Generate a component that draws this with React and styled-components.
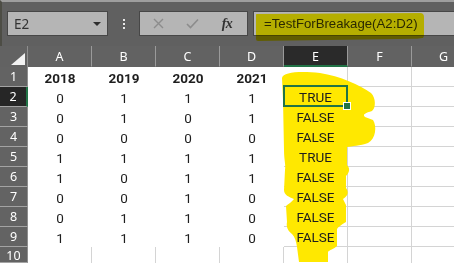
import React from 'react';
import styled, { createGlobalStyle } from 'styled-components';

const GlobalStyle = createGlobalStyle`
  html, body { margin: 0; padding: 0; background: #ffffff; }
  body { font-family: "Liberation Sans", Arial, sans-serif; }
  * { box-sizing: border-box; }
`;

const Window = styled.div`
  position: relative;
  width: 454px;
  height: 271px;
  overflow: hidden;
  background: #ffffff;
  display: flex;
  flex-direction: column;
`;

const Bar = styled.div`
  flex: none;
  height: 46px;
  background: #606060;
  border-top: 2px solid #9e9e9e;
  border-left: 2px solid #4d4d45;
  display: flex;
  align-items: flex-start;
  padding: 9px 0 0 5px;
`;

const NameBox = styled.div`
  width: 101px;
  height: 25px;
  background: #b5b5b5;
  border: 1px solid #474747;
  display: flex;
  align-items: center;
  justify-content: space-between;
  padding: 0 6px 0 6px;
  font-family: "Noto Sans", "Open Sans", sans-serif;
  font-size: 13.5px;
  color: #333333;
`;

const Caret = styled.span`
  width: 0;
  height: 0;
  border-left: 4px solid transparent;
  border-right: 4px solid transparent;
  border-top: 4px solid #2e2e2e;
`;

const Grip = styled.div`
  width: 31px;
  height: 25px;
  display: flex;
  flex-direction: column;
  align-items: center;
  justify-content: center;
  gap: 2px;
  & > i {
    width: 2px;
    height: 2px;
    background: #e8e8e8;
  }
`;

const ButtonBox = styled.div`
  width: 109px;
  height: 25px;
  background: #b5b5b5;
  border: 1px solid #474747;
  display: grid;
  grid-template-columns: 37px 30px 40px;
  align-items: center;
  justify-items: center;
`;

const IconButton = styled.span`
  display: flex;
  align-items: center;
  justify-content: center;
  color: ${(p) => (p.$dim ? '#8c8c8c' : '#2f2f2f')};
`;

const Fx = styled.span`
  font-family: "Liberation Serif", "DejaVu Serif", serif;
  font-style: italic;
  font-weight: bold;
  font-size: 14px;
  color: #333333;
  letter-spacing: -0.5px;
`;

const FormulaInput = styled.div`
  position: relative;
  flex: 1;
  margin-left: 5px;
  height: 25px;
  background: #b5b5b5;
  border: 1px solid #474747;
  border-right: none;
  display: flex;
  align-items: center;
  padding-left: 10px;
  font-family: "Liberation Sans", Arial, sans-serif;
  font-size: 13.2px;
  color: #2a2a2a;
`;

const Marker = styled.span`
  position: absolute;
  left: 2px;
  top: 1px;
  width: 168px;
  height: 28px;
  background: #fff500;
  mix-blend-mode: multiply;
  border-radius: 2px 4px 6px 2px;
  clip-path: polygon(0 4%, 100% 0, 100% 88%, 96% 92%, 0 100%);
`;

const Sheet = styled.div`
  flex: none;
  display: grid;
  grid-template-columns: 28px repeat(7, 64px);
  grid-template-rows: 21px repeat(9, 20px) 16px;
  width: 476px;
  font-family: Roboto, "Liberation Sans", Arial, sans-serif;
`;

const Corner = styled.div`
  background: #626262;
  border-right: 1px solid #8e8e8e;
  display: flex;
  align-items: flex-end;
  justify-content: flex-end;
  padding: 0 2px 2px 0;
`;

const ColHeader = styled.div`
  background: ${(p) => (p.$active ? '#2a2a2a' : '#626262')};
  border-right: 1px solid #9a9a9a;
  border-bottom: ${(p) => (p.$active ? '2px solid #217346' : '1px solid #626262')};
  color: #ffffff;
  font-family: "Noto Sans", "Open Sans", sans-serif;
  font-size: 12.5px;
  display: flex;
  align-items: center;
  justify-content: center;
  padding-top: 1px;
`;

const RowHeader = styled.div`
  background: ${(p) => (p.$active ? '#262626' : '#636363')};
  border-bottom: 1px solid #a3a3a3;
  border-right: ${(p) => (p.$active ? '2px solid #217346' : '1px solid #8e8e8e')};
  color: #ffffff;
  font-family: "Noto Sans", "Open Sans", sans-serif;
  font-size: 12.5px;
  display: flex;
  align-items: ${(p) => (p.$cut ? 'flex-start' : 'center')};
  justify-content: center;
  overflow: hidden;
`;

const Cell = styled.div`
  position: relative;
  background: #ffffff;
  border-right: ${(p) => (p.$plain ? 'none' : '1px solid #d4d4d4')};
  border-bottom: ${(p) => (p.$plain || p.$cut ? 'none' : '1px solid #d4d4d4')};
  display: flex;
  align-items: center;
  justify-content: center;
  padding-top: 1px;
  font-size: 13.5px;
  font-weight: ${(p) => (p.$bold ? 'bold' : 'normal')};
  color: #1e1e1e;
  &::after {
    content: ${(p) => (p.$selected ? "''" : 'none')};
    position: absolute;
    top: -2px;
    left: -1px;
    right: -1px;
    bottom: -1px;
    border: 2px solid #217346;
    z-index: 3;
  }
  &::before {
    content: ${(p) => (p.$selected ? "''" : 'none')};
    position: absolute;
    right: -4px;
    bottom: -4px;
    width: 6px;
    height: 6px;
    background: #217346;
    border: 1px solid #ffffff;
    z-index: 4;
  }
`;

const CellText = styled.span`
  position: relative;
  z-index: 2;
`;

const Scribble = styled.svg`
  position: absolute;
  left: 0;
  top: 0;
  width: 454px;
  height: 271px;
  z-index: 1;
  pointer-events: none;
`;

const columns = ['A', 'B', 'C', 'D', 'E', 'F', 'G'];

const rows = [
  ['2018', '2019', '2020', '2021', ''],
  ['0', '1', '1', '1', 'TRUE'],
  ['0', '1', '0', '1', 'FALSE'],
  ['0', '0', '0', '0', 'FALSE'],
  ['1', '1', '1', '1', 'TRUE'],
  ['1', '0', '1', '1', 'FALSE'],
  ['0', '0', '1', '0', 'FALSE'],
  ['0', '1', '1', '0', 'FALSE'],
  ['1', '1', '1', '0', 'FALSE'],
];

const scribblePath = `
M 282 78
C 283 72, 300 71, 320 73
C 340 76, 360 85, 371 93
C 376 98, 376 108, 372 111
C 366 113, 362 114, 365 117
L 373 120
C 377 126, 376 139, 368 143
C 360 146, 352 146, 347 147
L 347 165
C 350 168, 350 172, 346 176
L 346 188
C 349 192, 348 196, 343 199
L 346 205
L 346 222
C 341 225, 338 227, 337 229
L 337 246
C 334 249, 329 250, 328 252
L 328 262
L 299 262
L 297 247
C 296 241, 295 237, 292 234
C 288 231, 286 227, 287 222
L 286 206
C 288 204, 292 202, 294 199
C 289 197, 284 195, 284 190
L 285 170
C 286 165, 284 160, 284 150
L 283 100
Z`;

export default function App() {
  return (
    <Window>
      <GlobalStyle />
      <Bar>
        <NameBox>
          <span>E2</span>
          <Caret />
        </NameBox>
        <Grip>
          <i />
          <i />
          <i />
        </Grip>
        <ButtonBox>
          <IconButton $dim>
            <svg width="11" height="11" viewBox="0 0 11 11">
              <path d="M1 1 L10 10 M10 1 L1 10" stroke="currentColor" strokeWidth="1.4" fill="none" />
            </svg>
          </IconButton>
          <IconButton $dim>
            <svg width="13" height="11" viewBox="0 0 13 11">
              <path d="M1 6 L4.5 9.5 L12 1.5" stroke="currentColor" strokeWidth="1.6" fill="none" />
            </svg>
          </IconButton>
          <IconButton>
            <Fx>fx</Fx>
          </IconButton>
        </ButtonBox>
        <FormulaInput>
          <Marker />
          <span>=TestForBreakage(A2:D2)</span>
        </FormulaInput>
      </Bar>
      <Sheet>
        <Corner>
          <svg width="14" height="12" viewBox="0 0 14 12">
            <path d="M14 0 L14 12 L0 12 Z" fill="#f2f2f2" />
          </svg>
        </Corner>
        {columns.map((c) => (
          <ColHeader key={c} $active={c === 'E'}>
            {c}
          </ColHeader>
        ))}
        {rows.map((r, i) => (
          <React.Fragment key={i}>
            <RowHeader $active={i === 1}>{i + 1}</RowHeader>
            {columns.map((c, j) => (
              <Cell
                key={c}
                $plain={j < 4}
                $bold={i === 0 && j < 4}
                $selected={i === 1 && j === 4}
              >
                {r[j] ? <CellText>{r[j]}</CellText> : null}
              </Cell>
            ))}
          </React.Fragment>
        ))}
        <RowHeader $cut>10</RowHeader>
        {columns.map((c) => (
          <Cell key={c} $cut />
        ))}
      </Sheet>
      <Scribble viewBox="0 0 454 271">
        <path d={scribblePath} fill="#ffe800" />
      </Scribble>
    </Window>
  );
}
